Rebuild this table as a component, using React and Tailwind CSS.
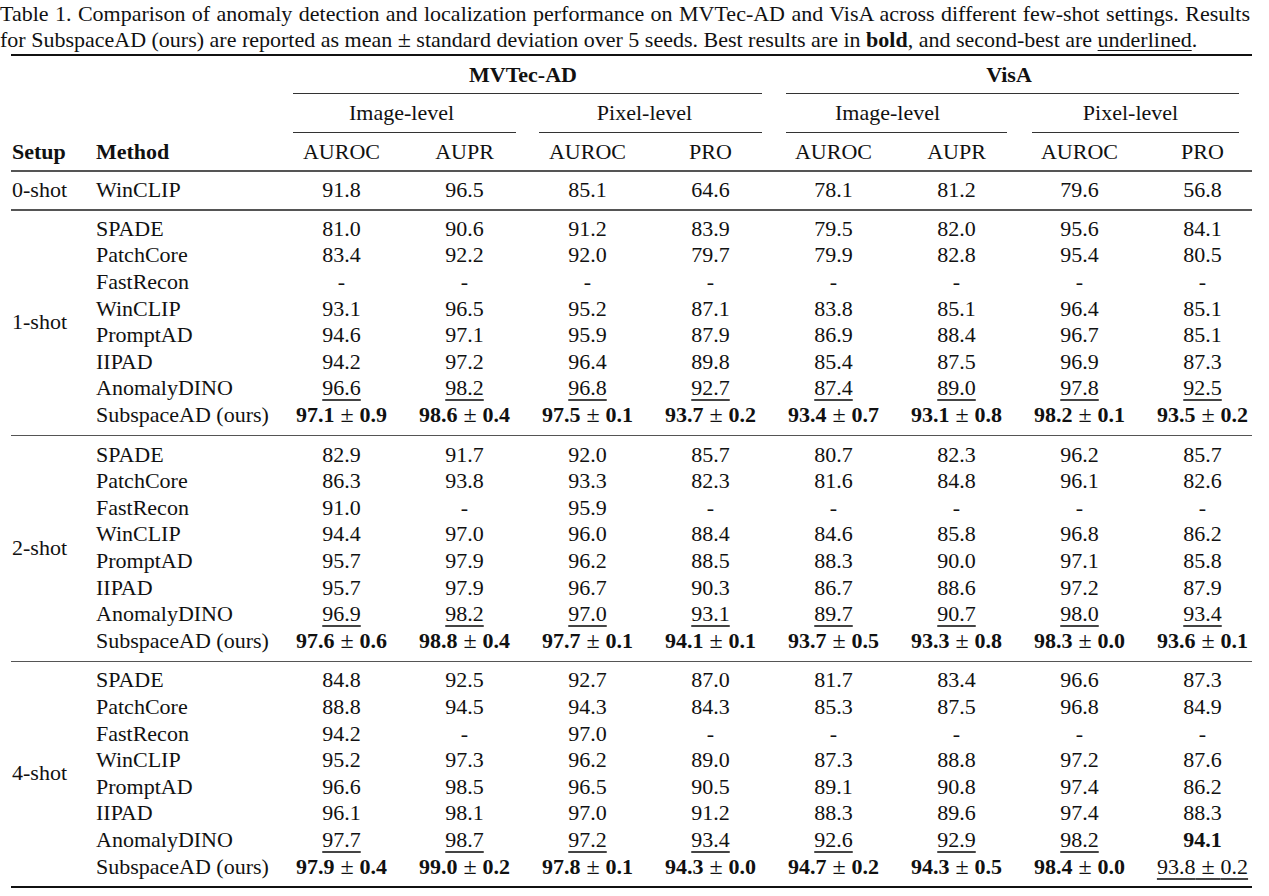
import React from 'react';

const groups = [
  {
    setup: '0-shot',
    rows: [['WinCLIP', '91.8', '96.5', '85.1', '64.6', '78.1', '81.2', '79.6', '56.8']],
  },
  {
    setup: '1-shot',
    rows: [
      ['SPADE', '81.0', '90.6', '91.2', '83.9', '79.5', '82.0', '95.6', '84.1'],
      ['PatchCore', '83.4', '92.2', '92.0', '79.7', '79.9', '82.8', '95.4', '80.5'],
      ['FastRecon', '-', '-', '-', '-', '-', '-', '-', '-'],
      ['WinCLIP', '93.1', '96.5', '95.2', '87.1', '83.8', '85.1', '96.4', '85.1'],
      ['PromptAD', '94.6', '97.1', '95.9', '87.9', '86.9', '88.4', '96.7', '85.1'],
      ['IIPAD', '94.2', '97.2', '96.4', '89.8', '85.4', '87.5', '96.9', '87.3'],
      ['AnomalyDINO', '_96.6', '_98.2', '_96.8', '_92.7', '_87.4', '_89.0', '_97.8', '_92.5'],
      ['SubspaceAD (ours)', '*97.1|0.9', '*98.6|0.4', '*97.5|0.1', '*93.7|0.2', '*93.4|0.7', '*93.1|0.8', '*98.2|0.1', '*93.5|0.2'],
    ],
  },
  {
    setup: '2-shot',
    rows: [
      ['SPADE', '82.9', '91.7', '92.0', '85.7', '80.7', '82.3', '96.2', '85.7'],
      ['PatchCore', '86.3', '93.8', '93.3', '82.3', '81.6', '84.8', '96.1', '82.6'],
      ['FastRecon', '91.0', '-', '95.9', '-', '-', '-', '-', '-'],
      ['WinCLIP', '94.4', '97.0', '96.0', '88.4', '84.6', '85.8', '96.8', '86.2'],
      ['PromptAD', '95.7', '97.9', '96.2', '88.5', '88.3', '90.0', '97.1', '85.8'],
      ['IIPAD', '95.7', '97.9', '96.7', '90.3', '86.7', '88.6', '97.2', '87.9'],
      ['AnomalyDINO', '_96.9', '_98.2', '_97.0', '_93.1', '_89.7', '_90.7', '_98.0', '_93.4'],
      ['SubspaceAD (ours)', '*97.6|0.6', '*98.8|0.4', '*97.7|0.1', '*94.1|0.1', '*93.7|0.5', '*93.3|0.8', '*98.3|0.0', '*93.6|0.1'],
    ],
  },
  {
    setup: '4-shot',
    rows: [
      ['SPADE', '84.8', '92.5', '92.7', '87.0', '81.7', '83.4', '96.6', '87.3'],
      ['PatchCore', '88.8', '94.5', '94.3', '84.3', '85.3', '87.5', '96.8', '84.9'],
      ['FastRecon', '94.2', '-', '97.0', '-', '-', '-', '-', '-'],
      ['WinCLIP', '95.2', '97.3', '96.2', '89.0', '87.3', '88.8', '97.2', '87.6'],
      ['PromptAD', '96.6', '98.5', '96.5', '90.5', '89.1', '90.8', '97.4', '86.2'],
      ['IIPAD', '96.1', '98.1', '97.0', '91.2', '88.3', '89.6', '97.4', '88.3'],
      ['AnomalyDINO', '_97.7', '_98.7', '_97.2', '_93.4', '_92.6', '_92.9', '_98.2', '*94.1'],
      ['SubspaceAD (ours)', '*97.9|0.4', '*99.0|0.2', '*97.8|0.1', '*94.3|0.0', '*94.7|0.2', '*94.3|0.5', '*98.4|0.0', '_93.8|0.2'],
    ],
  },
];

const metrics = ['AUROC', 'AUPR', 'AUROC', 'PRO', 'AUROC', 'AUPR', 'AUROC', 'PRO'];

// math-style plus/minus, a touch larger than the text face
const Pm = () => <span className="font-normal text-[24px] leading-none">{'\u00a0±\u00a0'}</span>;

// "*" = bold, "_" = underlined, "|" splits mean and std
const Value = ({ v }) => {
  const bold = v.startsWith('*');
  const under = v.startsWith('_');
  const raw = bold || under ? v.slice(1) : v;
  const [mean, std] = raw.split('|');
  const w = bold ? 'font-bold' : '';
  return (
    <span className={under ? 'underline decoration-[1.5px] decoration-[#444] underline-offset-[4px]' : ''}>
      <span className={w}>{mean}</span>
      {std && (
        <>
          <Pm />
          <span className={w}>{std}</span>
        </>
      )}
    </span>
  );
};

const DataRow = ({ row }) => (
  <div className="flex h-[26.6px] items-center">
    <div className="w-[184px] shrink-0 whitespace-nowrap">{row[0]}</div>
    {row.slice(1).map((v, i) => (
      <div key={i} className="w-[123px] shrink-0 text-center whitespace-nowrap">
        <Value v={v} />
      </div>
    ))}
  </div>
);

const App = () => {
  return (
    <div className="w-[1269px] h-[896px] bg-white text-[#111] text-[22px] leading-[26px] font-['Liberation_Serif',serif]">
      {/* Caption */}
      <div className="pt-px w-[1250px]">
        <p className="whitespace-nowrap text-justify [text-align-last:justify]">
          Table 1. Comparison of anomaly detection and localization performance on MVTec-AD and VisA across different few-shot settings. Results
        </p>
        <p className="whitespace-nowrap">
          for SubspaceAD (ours) are reported as mean <span className="text-[24px] leading-none">±</span> standard deviation over 5 seeds. Best results are in <b>bold</b>, and second-best are{' '}
          <span className="underline decoration-1 underline-offset-[3px]">underlined</span>.
        </p>
      </div>

      <div className="ml-[11px] w-[1241px] mt-[1px]">
        {/* Header */}
        <div className="h-[2px] bg-[#111]" />
        <div className="flex h-[37px] items-center">
          <div className="w-[269px] shrink-0" />
          <div className="w-[492px] text-center font-bold">MVTec-AD</div>
          <div className="w-[492px] text-center font-bold">VisA</div>
        </div>
        <div className="flex">
          <div className="w-[282px] shrink-0" />
          <div className="w-[469px] h-px bg-[#333]" />
          <div className="w-[24px] shrink-0" />
          <div className="w-[453px] h-px bg-[#333]" />
        </div>
        <div className="flex h-[38px] items-center">
          <div className="w-[269px] shrink-0" />
          <div className="w-[246px] text-center">Image-level</div>
          <div className="w-[246px] text-center">Pixel-level</div>
          <div className="w-[246px] text-center">Image-level</div>
          <div className="w-[246px] text-center">Pixel-level</div>
        </div>
        <div className="flex">
          <div className="w-[282px] shrink-0" />
          <div className="w-[223px] h-px bg-[#333]" />
          <div className="w-[23px] shrink-0" />
          <div className="w-[223px] h-px bg-[#333]" />
          <div className="w-[24px] shrink-0" />
          <div className="w-[221px] h-px bg-[#333]" />
          <div className="w-[25px] shrink-0" />
          <div className="w-[207px] h-px bg-[#333]" />
        </div>
        <div className="flex h-[37px] items-center">
          <div className="w-[85px] shrink-0 pl-px font-bold">Setup</div>
          <div className="w-[184px] shrink-0 font-bold">Method</div>
          {metrics.map((m, i) => (
            <div key={i} className="w-[123px] shrink-0 text-center">{m}</div>
          ))}
        </div>

        {/* Body */}
        {groups.map((g, gi) => (
          <div key={gi}>
            <div className="h-[1.5px] bg-[#555]" />
            <div className={gi === 0 ? 'flex items-center py-[5.5px]' : 'flex items-center pt-[5px] pb-[6.5px]'}>
              <div className="w-[85px] shrink-0 pl-px">{g.setup}</div>
              <div>
                {g.rows.map((r, ri) => (
                  <DataRow key={ri} row={r} />
                ))}
              </div>
            </div>
          </div>
        ))}
        <div className="h-[2px] bg-[#111]" />
      </div>
    </div>
  );
};

export default App;
